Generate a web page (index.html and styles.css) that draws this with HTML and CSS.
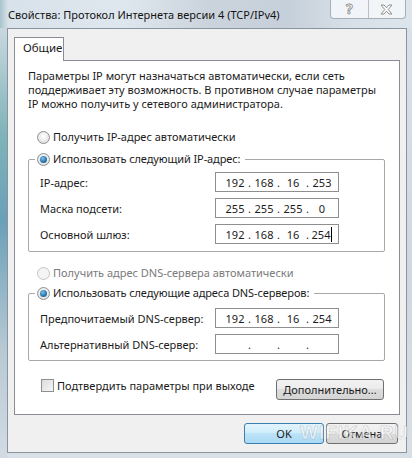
FILE: index.html
```html
<!DOCTYPE html>
<html lang="ru">
<head>
    <meta charset="UTF-8">
    <meta name="viewport" content="width=device-width, initial-scale=1.0">
    <title>Свойства: Протокол Интернета версии 4 (TCP/IPv4)</title>
    <link rel="stylesheet" href="styles.css">
</head>
<body>

    <div class="window">
        <div class="titlebar">
            <span class="title">Свойства: Протокол Интернета версии 4 (TCP/IPv4)</span>
            <div class="caption-btns">
                <span class="cap help">?</span>
                <span class="cap close">
                    <svg width="13" height="11" viewBox="0 0 13 11">
                        <polygon points="1,1 4,1 6.5,3.8 9,1 12,1 8.2,5.5 12,10 9,10 6.5,7.2 4,10 1,10 4.8,5.5" fill="#fff" stroke="#8d8d8d" stroke-width="1"/>
                    </svg>
                </span>
            </div>
        </div>

        <div class="frame">
            <div class="client">
                <div class="tabs">
                    <div class="tab">Общие</div>
                </div>

                <div class="panel">
                    <p class="intro">Параметры IP могут назначаться автоматически, если сеть<br>поддерживает эту возможность. В противном случае параметры<br>IP можно получить у сетевого администратора.</p>

                    <div class="option"><span class="radio"></span>Получить IP-адрес автоматически</div>

                    <!-- static ip block -->
                    <fieldset class="group group-ip">
                        <legend class="option"><span class="radio checked"></span>Использовать следующий IP-адрес:</legend>
                        <div class="row">
                            <span class="label">IP-адрес:</span>
                            <div class="ip"><span class="oct">192</span><span class="dot">.</span><span class="oct">168</span><span class="dot">.</span><span class="oct">16</span><span class="dot">.</span><span class="oct">253</span></div>
                        </div>
                        <div class="row">
                            <span class="label">Маска подсети:</span>
                            <div class="ip"><span class="oct">255</span><span class="dot">.</span><span class="oct">255</span><span class="dot">.</span><span class="oct">255</span><span class="dot">.</span><span class="oct">0</span></div>
                        </div>
                        <div class="row">
                            <span class="label">Основной шлюз:</span>
                            <div class="ip"><span class="oct">192</span><span class="dot">.</span><span class="oct">168</span><span class="dot">.</span><span class="oct">16</span><span class="dot">.</span><span class="oct">254<span class="caret"></span></span></div>
                        </div>
                    </fieldset>

                    <div class="option disabled"><span class="radio"></span>Получить адрес DNS-сервера автоматически</div>

                    <!-- dns block -->
                    <fieldset class="group group-dns">
                        <legend class="option"><span class="radio checked"></span>Использовать следующие адреса DNS-серверов:</legend>
                        <div class="row">
                            <span class="label">Предпочитаемый DNS-сервер:</span>
                            <div class="ip"><span class="oct">192</span><span class="dot">.</span><span class="oct">168</span><span class="dot">.</span><span class="oct">16</span><span class="dot">.</span><span class="oct">254</span></div>
                        </div>
                        <div class="row">
                            <span class="label">Альтернативный DNS-сервер:</span>
                            <div class="ip"><span class="oct"></span><span class="dot">.</span><span class="oct"></span><span class="dot">.</span><span class="oct"></span><span class="dot">.</span><span class="oct"></span></div>
                        </div>
                    </fieldset>

                    <div class="bottom-row">
                        <div class="check-option"><span class="checkbox"></span>Подтвердить параметры при выходе</div>
                        <button class="btn btn-advanced">Дополнительно...</button>
                    </div>
                </div>

                <div class="dialog-buttons">
                    <button class="btn btn-ok">OK</button>
                    <button class="btn btn-cancel">Отмена</button>
                </div>
            </div>
        </div>

        <div class="watermark-small">WIFIKA.RU</div>
    </div>

</body>
</html>
```

FILE: styles.css
```css
* {
    box-sizing: border-box;
}

body {
    margin: 0;
    font-family: "Segoe UI", "Noto Sans", sans-serif;
    font-size: 11px;
    color: #1b1b1b;
}

.window {
    position: relative;
    width: 412px;
    height: 458px;
    display: flex;
    flex-direction: column;
    overflow: hidden;
    background: linear-gradient(180deg, #d9e2ea, #cfd8e0 60%, #d8dfe6);
}

.titlebar {
    height: 28px;
    display: flex;
    justify-content: space-between;
    align-items: flex-start;
    padding-left: 8px;
    background: linear-gradient(90deg, #a9c4cc 0, #d8e2ea 2%, #dfe7ee 30%, #cbd4dd 50%, #c6d0da 70%, #d7e0e8 85%, #dde5ec 100%);
}

.title {
    margin-top: 7px;
    font-size: 11px;
    line-height: 16px;
    color: #141414;
}

.caption-btns {
    display: flex;
    width: 76px;
    height: 19px;
    margin-right: 6px;
    border: 1px solid #a5b0bb;
    border-top: none;
    border-radius: 0 0 4px 4px;
    background: rgba(244, 246, 249, 0.9);
}

.cap {
    flex: 1;
    display: flex;
    align-items: center;
    justify-content: center;
}

.close {
    border-left: 1px solid #b8c1ca;
}

.help {
    font-size: 14px;
    font-weight: bold;
    color: #fff;
    -webkit-text-stroke: 0.8px #8d8d8d;
    line-height: 1;
}

.frame {
    flex: 1;
    padding: 0 5px 5px 7px;
    background: linear-gradient(180deg, #c9d8df 0, #7fb3b9 25%, #6aa0b8 45%, #b8c9d4 75%, #d2dbe3 100%) no-repeat 0 0 / 7px 100%;
}

.client {
    width: 400px;
    height: 425px;
    border: 1px solid #8a949e;
    background: #f0f0f0;
    display: flex;
    flex-direction: column;
}

.tabs {
    display: flex;
    margin-top: 8px;
    padding-left: 6px;
}

.tab {
    position: relative;
    z-index: 1;
    width: 50px;
    height: 24px;
    margin-bottom: -1px;
    padding: 2px 0 0 8px;
    line-height: 16px;
    background: #fff;
    border: 1px solid #898c95;
    border-bottom: none;
    font-size: 11.5px;
}

.panel {
    height: 355px;
    margin: 0 6px 0 6px;
    padding: 8px 14px 0 13px;
    background: #fff;
    border: 1px solid #898c95;
    display: flex;
    flex-direction: column;
}

.intro {
    margin: 0;
    line-height: 14px;
}

.option {
    display: flex;
    align-items: center;
    height: 16px;
    line-height: 16px;
    padding-left: 9px;
}

.panel > .option:first-of-type {
    margin-top: 18px;
}

.radio {
    width: 13px;
    height: 13px;
    margin-right: 3px;
    border-radius: 50%;
    border: 1px solid #8e8f8f;
    background: radial-gradient(circle at 50% 40%, #ffffff 0, #f0f0f0 40%, #d6d6d6 100%);
    display: flex;
    align-items: center;
    justify-content: center;
}

.radio.checked::after {
    content: "";
    width: 7px;
    height: 7px;
    border-radius: 50%;
    background: radial-gradient(circle at 40% 35%, #7cc0ea 0, #2b78b0 55%, #174f7c 100%);
}

.option.disabled {
    margin-top: 13px;
    color: #7a7a7a;
}

.option.disabled .radio {
    border-color: #c4c4c4;
    background: #f4f4f4;
}

.group {
    margin: 0;
    min-width: 0;
    border: 1px solid #a8a8a8;
    border-radius: 2px;
}

.group legend {
    margin-left: -5px;
    padding: 0 5px 0 2px;
    letter-spacing: -0.1px;
}

.group-ip {
    margin-top: 6px;
    padding: 5px 0 7px 11px;
}

.group-dns {
    margin-top: 4px;
    padding: 7px 0 6px 11px;
}

.row {
    display: flex;
    align-items: center;
    height: 20px;
}

.row + .row {
    margin-top: 6px;
}

.label {
    width: 175px;
}

.ip {
    width: 124px;
    height: 20px;
    padding-left: 8px;
    border: 1px solid #8f8f8f;
    display: flex;
    align-items: center;
    background: #fff;
}

.oct {
    width: 22px;
    text-align: center;
    display: flex;
    align-items: center;
    justify-content: center;
}

.dot {
    width: 7px;
    text-align: center;
}

.caret {
    display: inline-block;
    width: 1px;
    height: 15px;
    margin-left: 1px;
    background: #000;
}

.bottom-row {
    display: flex;
    align-items: flex-start;
    margin-top: 18px;
}

.check-option {
    display: flex;
    align-items: center;
    height: 16px;
    margin-top: -2px;
    padding-left: 13px;
}

.checkbox {
    width: 13px;
    height: 13px;
    margin-right: 3px;
    border: 1px solid #8e8f8f;
    background: linear-gradient(135deg, #dcdcdc, #f6f6f6);
}

.btn {
    height: 21px;
    padding: 0;
    font: inherit;
    color: #1b1b1b;
    border: 1px solid #707070;
    border-radius: 3px;
    background: linear-gradient(180deg, #f2f2f2 0, #ebebeb 50%, #dddddd 50%, #d4d4d4 100%);
}

.btn-advanced {
    width: 108px;
    margin-left: auto;
    margin-right: 1px;
}

.dialog-buttons {
    display: flex;
    justify-content: flex-end;
    gap: 2px;
    margin-top: 8px;
    padding-right: 8px;
}

.btn-ok {
    width: 80px;
    border-color: #3c7fb1;
    background: linear-gradient(180deg, #e3f4fc 0, #d0edfb 45%, #bde3f8 50%, #a9d9f4 100%);
}

.btn-cancel {
    width: 72px;
}

.watermark-small {
    position: absolute;
    left: 300px;
    top: 422px;
    font-family: "Liberation Sans", sans-serif;
    font-size: 19px;
    font-weight: bold;
    letter-spacing: 1px;
    color: rgba(255, 255, 255, 0.55);
    -webkit-text-stroke: 0.5px rgba(140, 140, 140, 0.5);
    pointer-events: none;
}
```
